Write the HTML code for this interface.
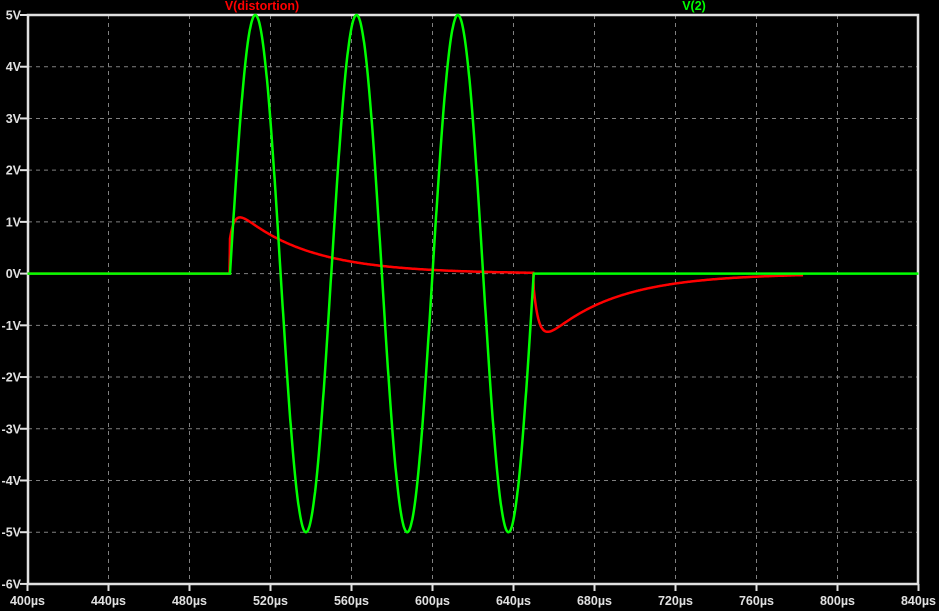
<!DOCTYPE html>
<html><head><meta charset="utf-8"><style>
body{margin:0;background:#000;width:939px;height:611px;overflow:hidden}
svg{display:block}
text{font-family:"Liberation Sans",sans-serif;font-weight:bold;font-size:12.5px}
</style></head><body>
<svg id="s" width="939" height="611" viewBox="0 0 939 611"></svg>
<script>
var s=document.getElementById('s'),h='';
var X=function(t){return 27.5+(t-400)*81/40},Y=function(v){return 273.6-v*51.72};
for(var i=1;i<11;i++){var x=X(400+40*i);h+='<line x1="'+x+'" y1="15" x2="'+x+'" y2="584" stroke="#808080" stroke-dasharray="4,4"/>';}
for(var v=-5;v<5;v++){var y=Y(v);h+='<line x1="28" y1="'+y+'" x2="918" y2="'+y+'" stroke="#808080" stroke-dasharray="4,4"/>';}
h+='<rect x="28" y="15" width="890" height="569" fill="none" stroke="#e0e0e0" stroke-width="2.5"/>';
for(var v=-6;v<=5;v++){var y=Y(v);h+='<line x1="20" y1="'+y+'" x2="28" y2="'+y+'" stroke="#e0e0e0" stroke-width="2"/><text x="21" y="'+(y+4.5)+'" fill="#e0e0e0" text-anchor="end">'+v+'V</text>';}
for(var i=0;i<=11;i++){var t=400+40*i,x=X(t);h+='<line x1="'+x+'" y1="584" x2="'+x+'" y2="591" stroke="#e0e0e0" stroke-width="2"/><text x="'+x+'" y="605" fill="#e0e0e0" text-anchor="middle">'+t+'\u00b5s</text>';}
var g=[];for(var t=400;t<=840;t+=0.25){var v=(t>500&&t<650)?5*Math.sin(2*Math.PI*(t-500)/50):0;g.push(X(t).toFixed(1)+','+Y(v).toFixed(1));}
var r=[];for(var t=400;t<=783;t+=0.25){var v=0;if(t>=500&&t<650){var q=t-500;v=1.35*Math.exp(-q/34)*(1-0.5*Math.exp(-q/2.5));}else if(t>=650){var q=t-650;v=-1.5*Math.exp(-q/34)*(1-0.8*Math.exp(-q/3));}r.push(X(t).toFixed(1)+','+Y(v).toFixed(1));}
h+='<polyline points="'+r.join(' ')+'" fill="none" stroke="#ff0000" stroke-width="2.5"/>';
h+='<polyline points="'+g.join(' ')+'" fill="none" stroke="#00ff00" stroke-width="2.5"/>';
h+='<text x="262" y="10" fill="#ff0000" text-anchor="middle">V(distortion)</text>';
h+='<text x="694" y="10" fill="#00ff00" text-anchor="middle">V(2)</text>';
s.innerHTML=h;
</script>
</body></html>
